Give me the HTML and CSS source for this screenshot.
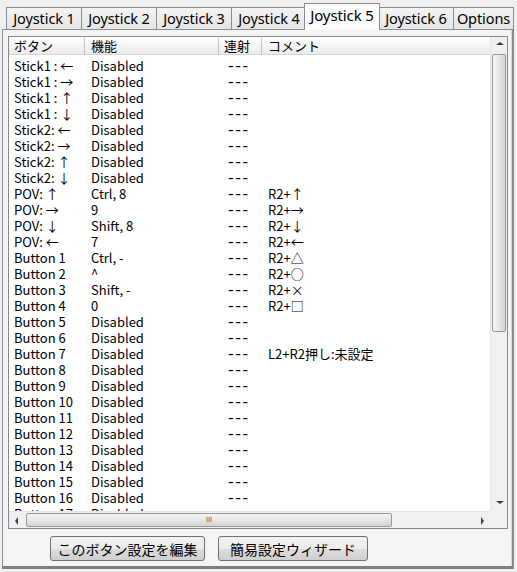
FILE: index.html
```html
<!DOCTYPE html>
<html lang="ja">
<head>
<meta charset="utf-8">
<link rel="stylesheet" href="styles.css">
</head>
<body>
<div class="window">
  <div class="tabs">
    <div class="tab">Joystick 1</div>
    <div class="tab">Joystick 2</div>
    <div class="tab">Joystick 3</div>
    <div class="tab">Joystick 4</div>
    <div class="tab active">Joystick 5</div>
    <div class="tab">Joystick 6</div>
    <div class="tab last">Options</div>
  </div>
  <div class="panel">
    <div class="listbox">
      <div class="content">
        <div class="header">
          <div class="hcell c1">ボタン</div>
          <div class="hcell c2">機能</div>
          <div class="hcell c3">連射</div>
          <div class="hcell c4">コメント</div>
        </div>
        <div class="rows">
          <div class="row"><span class="c1">Stick1 : ←</span><span class="c2">Disabled</span><span class="c3 d">---</span><span class="c4"></span></div>
          <div class="row"><span class="c1">Stick1 : →</span><span class="c2">Disabled</span><span class="c3 d">---</span><span class="c4"></span></div>
          <div class="row"><span class="c1">Stick1 : ↑</span><span class="c2">Disabled</span><span class="c3 d">---</span><span class="c4"></span></div>
          <div class="row"><span class="c1">Stick1 : ↓</span><span class="c2">Disabled</span><span class="c3 d">---</span><span class="c4"></span></div>
          <div class="row"><span class="c1">Stick2: ←</span><span class="c2">Disabled</span><span class="c3 d">---</span><span class="c4"></span></div>
          <div class="row"><span class="c1">Stick2: →</span><span class="c2">Disabled</span><span class="c3 d">---</span><span class="c4"></span></div>
          <div class="row"><span class="c1">Stick2: ↑</span><span class="c2">Disabled</span><span class="c3 d">---</span><span class="c4"></span></div>
          <div class="row"><span class="c1">Stick2: ↓</span><span class="c2">Disabled</span><span class="c3 d">---</span><span class="c4"></span></div>
          <div class="row"><span class="c1">POV: ↑</span><span class="c2">Ctrl, 8</span><span class="c3 d">---</span><span class="c4">R2+↑</span></div>
          <div class="row"><span class="c1">POV: →</span><span class="c2">9</span><span class="c3 d">---</span><span class="c4">R2+→</span></div>
          <div class="row"><span class="c1">POV: ↓</span><span class="c2">Shift, 8</span><span class="c3 d">---</span><span class="c4">R2+↓</span></div>
          <div class="row"><span class="c1">POV: ←</span><span class="c2">7</span><span class="c3 d">---</span><span class="c4">R2+←</span></div>
          <div class="row"><span class="c1">Button 1</span><span class="c2">Ctrl, -</span><span class="c3 d">---</span><span class="c4">R2+△</span></div>
          <div class="row"><span class="c1">Button 2</span><span class="c2">^</span><span class="c3 d">---</span><span class="c4">R2+○</span></div>
          <div class="row"><span class="c1">Button 3</span><span class="c2">Shift, -</span><span class="c3 d">---</span><span class="c4">R2+×</span></div>
          <div class="row"><span class="c1">Button 4</span><span class="c2">0</span><span class="c3 d">---</span><span class="c4">R2+□</span></div>
          <div class="row"><span class="c1">Button 5</span><span class="c2">Disabled</span><span class="c3 d">---</span><span class="c4"></span></div>
          <div class="row"><span class="c1">Button 6</span><span class="c2">Disabled</span><span class="c3 d">---</span><span class="c4"></span></div>
          <div class="row"><span class="c1">Button 7</span><span class="c2">Disabled</span><span class="c3 d">---</span><span class="c4">L2+R2押し:未設定</span></div>
          <div class="row"><span class="c1">Button 8</span><span class="c2">Disabled</span><span class="c3 d">---</span><span class="c4"></span></div>
          <div class="row"><span class="c1">Button 9</span><span class="c2">Disabled</span><span class="c3 d">---</span><span class="c4"></span></div>
          <div class="row"><span class="c1">Button 10</span><span class="c2">Disabled</span><span class="c3 d">---</span><span class="c4"></span></div>
          <div class="row"><span class="c1">Button 11</span><span class="c2">Disabled</span><span class="c3 d">---</span><span class="c4"></span></div>
          <div class="row"><span class="c1">Button 12</span><span class="c2">Disabled</span><span class="c3 d">---</span><span class="c4"></span></div>
          <div class="row"><span class="c1">Button 13</span><span class="c2">Disabled</span><span class="c3 d">---</span><span class="c4"></span></div>
          <div class="row"><span class="c1">Button 14</span><span class="c2">Disabled</span><span class="c3 d">---</span><span class="c4"></span></div>
          <div class="row"><span class="c1">Button 15</span><span class="c2">Disabled</span><span class="c3 d">---</span><span class="c4"></span></div>
          <div class="row"><span class="c1">Button 16</span><span class="c2">Disabled</span><span class="c3 d">---</span><span class="c4"></span></div>
          <div class="row"><span class="c1">Button 17</span><span class="c2">Disabled</span><span class="c3 d">---</span><span class="c4"></span></div>
        </div>
      </div>
      <div class="vscroll">
        <div class="arrow up"></div>
        <div class="vthumb"></div>
        <div class="vtrack"></div>
        <div class="arrow down"></div>
      </div>
      <div class="hscroll">
        <div class="arrow left"></div>
        <div class="hthumb"><span class="grip">III</span></div>
        <div class="htrack"></div>
        <div class="arrow right"></div>
      </div>
      <div class="corner"></div>
    </div>
    <div class="buttons">
      <button class="btn b1">このボタン設定を編集</button>
      <button class="btn b2">簡易設定ウィザード</button>
    </div>
  </div>
</div>
</body>
</html>
```

FILE: styles.css
```css
* { box-sizing: border-box; }
html, body {
  margin: 0;
  padding: 0;
  background: #f0f0f0;
  width: 517px;
  height: 572px;
  overflow: hidden;
}
.window {
  display: flex;
  flex-direction: column;
  height: 572px;
  padding: 3px 3px 3px 2px;
  font-family: "Noto Sans CJK JP", "Noto Sans", sans-serif;
  color: #000;
}
.tabs {
  display: flex;
  align-items: flex-end;
  height: 26px;
  padding-left: 4px;
  position: relative;
  z-index: 2;
}
.tab {
  width: 75px;
  height: 22px;
  border: 1px solid #898c95;
  border-bottom: none;
  border-right: none;
  background: linear-gradient(#f4f4f4, #e5e5e5);
  font-family: "Noto Sans", sans-serif;
  font-size: 14.5px;
  line-height: 21px;
  text-align: center;
  white-space: nowrap;
  letter-spacing: -0.1px;
}
.tab.last { width: 61px; border-right: 1px solid #898c95; }
.tab.active {
  height: 27px;
  width: 76px;
  margin: 0 -2px -1px -2px;
  border-right: 1px solid #898c95;
  background: #fbfbfb;
  line-height: 22px;
  position: relative;
  z-index: 3;
  font-size: 15px;
}
.tab.active + .tab { border-left: none; padding-left: 1px; }
.panel {
  flex: 1;
  border: 1px solid #898c95;
  border-right: 2px solid #8a8a8a;
  border-bottom: 3px solid #7f7f7f;
  box-shadow: inset -1px 0 #d8d8d8;
  background: #f4f4f4;
  display: flex;
  flex-direction: column;
  padding: 6px 6px 0 5px;
}
.listbox {
  width: 500px;
  height: 493px;
  border: 1px solid #828790;
  background: #fff;
  display: grid;
  grid-template-columns: 481px 17px;
  grid-template-rows: 474px 17px;
}
.content {
  overflow: hidden;
  font-size: 13px;
}
.header {
  display: flex;
  height: 18px;
  background: linear-gradient(#ffffff, #f3f3f3 60%, #eaeaea);
  border-bottom: 1px solid #d5d5d5;
  border-top: 1px solid #fff;
}
.hcell {
  height: 17px;
  line-height: 16px;
  border-right: 1px solid #c3c3c3;
  padding-left: 5px;
  white-space: nowrap;
}
.hcell.c4 { border-right: none; }
.c1 { width: 76px; flex: none; padding-left: 5px; }
.c2 { width: 134px; flex: none; padding-left: 6px; }
.c3 { width: 43px; flex: none; padding-left: 6px; }
.c4 { flex: 1; padding-left: 6px; }
.hcell.c1 { padding-left: 5px; }
.hcell.c2 { padding-left: 6px; }
.hcell.c3 { padding-left: 5px; }
.rows { padding-top: 3px; }
.row {
  display: flex;
  height: 16px;
  line-height: 16px;
  white-space: nowrap;
}
.d {
  padding-left: 9px;
  font-family: "Liberation Sans", sans-serif;
  font-size: 17px;
  letter-spacing: 1.6px;
  line-height: 15px;
}
.vscroll {
  display: flex;
  flex-direction: column;
  background: #f0f0f0;
  border-left: 1px solid #e6e6e6;
}
.arrow {
  width: 17px;
  height: 17px;
  flex: none;
  position: relative;
}
.arrow::after {
  content: "";
  position: absolute;
  width: 0; height: 0;
  border: 3px solid transparent;
}
.arrow.up::after { left: 5px; top: 5px; border-bottom: 3px solid #404040; border-top: none; border-left-width: 4px; border-right-width: 4px; }
.arrow.down::after { left: 5px; top: 7px; border-top: 3px solid #404040; border-bottom: none; border-left-width: 4px; border-right-width: 4px; }
.arrow.left::after { left: 6px; top: 5px; border-right: 3px solid #404040; border-left: none; border-top-width: 4px; border-bottom-width: 4px; }
.arrow.right::after { left: 8px; top: 5px; border-left: 3px solid #404040; border-right: none; border-top-width: 4px; border-bottom-width: 4px; }
.vthumb {
  height: 278px;
  margin: 0 1px;
  border: 1px solid #979797;
  border-radius: 2px;
  background: linear-gradient(90deg, #f4f4f4, #e6e6e6 50%, #d4d4d4);
}
.vtrack { flex: 1; }
.hscroll {
  display: flex;
  background: #f0f0f0;
  border-top: 1px solid #e6e6e6;
}
.hthumb {
  width: 366px;
  margin: 1px 0;
  border: 1px solid #979797;
  border-radius: 2px;
  background: linear-gradient(#f4f4f4, #e6e6e6 50%, #d4d4d4);
  display: flex;
  justify-content: center;
  align-items: center;
}
.grip {
  font-family: "DejaVu Sans", sans-serif;
  font-size: 7px;
  color: #555;
  letter-spacing: 0;
  line-height: 1;
}
.htrack { flex: 1; }
.corner { background: #f0f0f0; }
.buttons {
  display: flex;
  gap: 13px;
  padding: 7px 0 0 42px;
}
.btn {
  height: 25px;
  border: 1px solid #707070;
  border-radius: 3px;
  background: linear-gradient(#f2f2f2, #ebebeb 50%, #dddddd 51%, #cfcfcf);
  font-family: "Noto Sans CJK JP", sans-serif;
  font-size: 14px;
  line-height: 22px;
  padding: 0;
  color: #000;
}
.b1 { width: 155px; }
.b2 { width: 150px; }
```
